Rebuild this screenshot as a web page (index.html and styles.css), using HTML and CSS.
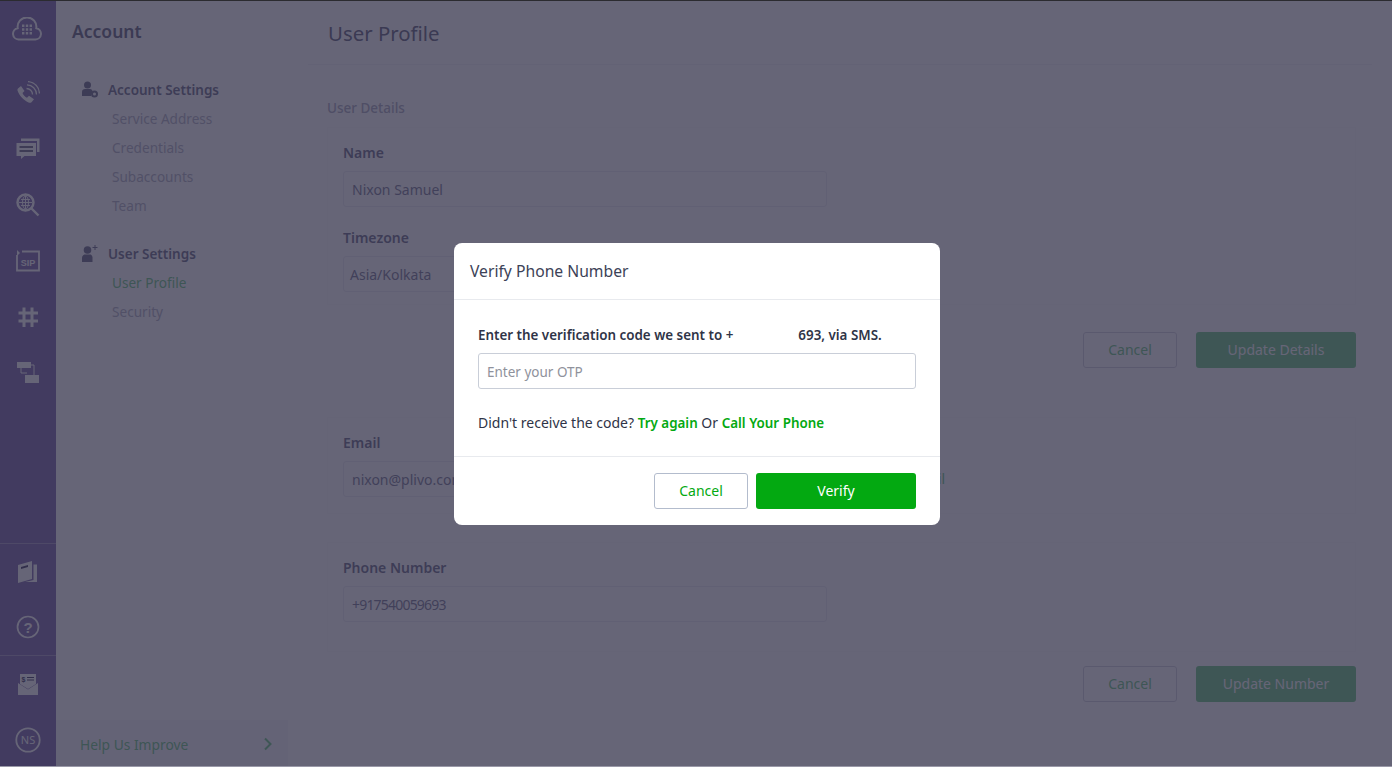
FILE: index.html
```html
<!DOCTYPE html>
<html lang="en">
<head>
  <meta charset="UTF-8">
  <title>User Profile</title>
  <link rel="stylesheet" href="styles.css">
</head>
<body>
  <div class="page">
    <nav class="rail">
      <div class="rail-logo">
        <svg width="32" height="24" viewBox="0 0 32 24"><path d="M7.500 22.500a5.700 5.700 0 0 1-.8-11.300A9.400 9.400 0 1 1 25.300 11.200a5.700 5.700 0 0 1-.8 11.300z" fill="none" stroke="#fff" stroke-width="2"/><path d="M11 7.500h2.400v2.400H11zM14.800 7.500h2.400v2.400h-2.400zM18.600 7.500H21v2.400h-2.400zM11 11.300h2.400v2.400H11zM14.800 11.300h2.400v2.400h-2.400zM18.600 11.300H21v2.400h-2.400zM11 15.100h2.400v2.400H11zM14.800 15.100h2.400v2.400h-2.400zM18.600 15.100H21v2.400h-2.400z" fill="#fff"/></svg>
      </div>
      <div class="rail-item">
        <svg width="24" height="24" viewBox="0 0 24 24"><path d="M2 7.500l3-2.500 3.500 5-2 2c.8 2 2.500 3.800 4.500 4.800l2-2 5 3.500-2.500 3c-.8.700-1.800.700-3 .2C7.500 19.200 3.200 14.500 1.600 9.800c-.3-.9-.2-1.700.4-2.300z" fill="#fff"/><path d="M10.500 7.500a6 6 0 0 1 6 6M11 3.800a9.700 9.700 0 0 1 9.500 9.700M12 .6a12 12 0 0 1 11.400 12" fill="none" stroke="#fff" stroke-width="1.300"/></svg>
      </div>
      <div class="rail-item">
        <svg width="24" height="22" viewBox="0 0 24 22"><path d="M5 3V.5h18.500V14H21V3z" fill="#fff"/><path d="M.5 5h19.500v13H8.500L5 21v-3H.5z" fill="#fff"/><path d="M3.500 9h13.500M3.500 13h13.500" stroke="#423c60" stroke-width="1.500"/></svg>
      </div>
      <div class="rail-item">
        <svg width="24" height="24" viewBox="0 0 24 24"><circle cx="9.500" cy="9.500" r="8" fill="none" stroke="#fff" stroke-width="2.400"/><path d="M9.500 3v13M3 9.500h13M5 6.500h9M5 12.500h9" stroke="#fff" stroke-width="1"/><ellipse cx="9.500" cy="9.500" rx="3" ry="6.500" fill="none" stroke="#fff"/><path d="M15 15l7.500 7.500" stroke="#fff" stroke-width="2.400"/></svg>
      </div>
      <div class="rail-item">
        <svg width="24" height="22" viewBox="0 0 24 22"><path d="M1 5v15.500h22V1.500H6" fill="none" stroke="#fff" stroke-width="1.800"/><path d="M1 0L4 3 1 6z" fill="#fff"/><text x="12" y="15.500" class="sip-text">SIP</text></svg>
      </div>
      <div class="rail-item">
        <svg width="20" height="20" viewBox="0 0 20 20"><path d="M6 .500V20M14 .500V20M.5 6H20M.5 14H20" stroke="#fff" stroke-width="3" fill="none"/></svg>
      </div>
      <div class="rail-item">
        <svg width="24" height="22" viewBox="0 0 24 22"><path d="M1 0h14v6H1zM9 13h14v8H9z" fill="#fff"/><path d="M15 3h3v10M5 6v5h6" stroke="#fff" stroke-width="1" fill="none"/></svg>
      </div>
      <div class="rail-bottom">
        <div class="rail-group">
          <div class="rail-item">
            <svg width="20" height="24" viewBox="0 0 20 24"><path d="M0 5L14 1v18L0 23z" fill="#fff"/><path d="M3 7l7-2v2l-7 2z" fill="#423c60"/><path d="M15.500 4.500H19V22H7l8.500-2z" fill="#fff"/></svg>
          </div>
          <div class="rail-item">
            <svg width="24" height="24" viewBox="0 0 24 24"><circle cx="12" cy="12" r="10.500" fill="none" stroke="#fff" stroke-width="1.700"/><text x="12" y="17.500" class="help-text">?</text></svg>
          </div>
        </div>
        <div class="rail-group">
          <div class="rail-item">
            <svg width="20" height="21" viewBox="0 0 20 21"><path d="M2 0h16v10l-8 5-8-5z" fill="#fff"/><path d="M0 9l10 6.500L20 9v12H0z" fill="#fff"/><text x="5.500" y="7.500" class="bill-text">$</text><path d="M9 3.500h7M9 6h7" stroke="#423c60" stroke-width="1"/></svg>
          </div>
          <div class="rail-item">
            <svg width="26" height="26" viewBox="0 0 26 26"><circle cx="13" cy="13" r="11.700" fill="none" stroke="#fff" stroke-width="1.800"/><text x="13" y="17" class="ns-text">NS</text></svg>
          </div>
        </div>
      </div>
    </nav>

    <aside class="subnav">
      <div class="subnav-body">
        <h2 class="subnav-title">Account</h2>
        <div class="subnav-group">
          <div class="subnav-head">
            <svg width="16" height="17" viewBox="0 0 16 17"><circle cx="5.500" cy="4" r="3.500" fill="#6e6e88"/><path d="M0 15V10.500C0 9 1.500 8 3 8h5c1.500 0 2.500 1 2.500 2.500L9 15z" fill="#6e6e88"/><circle cx="12.500" cy="13" r="2.500" fill="none" stroke="#6e6e88" stroke-width="2"/></svg>
            <span>Account Settings</span>
          </div>
          <a class="subnav-link">Service Address</a>
          <a class="subnav-link">Credentials</a>
          <a class="subnav-link">Subaccounts</a>
          <a class="subnav-link">Team</a>
        </div>
        <div class="subnav-group">
          <div class="subnav-head">
            <svg width="16" height="17" viewBox="0 0 16 17"><circle cx="5.500" cy="5" r="3.800" fill="#6e6e88"/><path d="M0 17v-4.500C0 11 1.500 9.500 3 9.500h5c1.500 0 2.500 1.500 2.500 3V17z" fill="#6e6e88"/><path d="M13 0v5M10.500 2.500h5" stroke="#6e6e88"/></svg>
            <span>User Settings</span>
          </div>
          <a class="subnav-link active">User Profile</a>
          <a class="subnav-link">Security</a>
        </div>
      </div>
      <div class="help-bar">
        <span>Help Us Improve</span>
        <svg width="10" height="14" viewBox="0 0 10 14"><path d="M2 1.500L7.500 7 2 12.500" fill="none" stroke="#70c884" stroke-width="2"/></svg>
      </div>
    </aside>

    <main class="content">
      <header class="content-head"><h1>User Profile</h1></header>
      <div class="content-body">
        <h3 class="section-title">User Details</h3>
        <section class="card card-details">
          <label class="field-label">Name</label>
          <div class="field">Nixon Samuel</div>
          <label class="field-label">Timezone</label>
          <div class="field field-select">Asia/Kolkata</div>
        </section>
        <div class="actions">
          <button class="btn btn-ghost">Cancel</button>
          <button class="btn btn-solid">Update Details</button>
        </div>
        <section class="card card-email">
          <label class="field-label">Email</label>
          <div class="field-row">
            <div class="field">nixon@plivo.com</div>
            <a class="verify-link">Verify Email</a>
          </div>
        </section>
        <section class="card card-phone">
          <label class="field-label">Phone Number</label>
          <div class="field field-number">+917540059693</div>
        </section>
        <div class="actions actions-last">
          <button class="btn btn-ghost">Cancel</button>
          <button class="btn btn-solid">Update Number</button>
        </div>
      </div>
    </main>

    <div class="overlay">
      <div class="modal">
        <div class="modal-head">Verify Phone Number</div>
        <div class="modal-body">
          <p class="otp-text">Enter the verification code we sent to +<span class="redacted"></span>693, via SMS.</p>
          <div class="otp-input">Enter your OTP</div>
          <p class="resend">Didn't receive the code? <a>Try again</a> Or <a>Call Your Phone</a></p>
        </div>
        <div class="modal-foot">
          <button class="btn btn-outline">Cancel</button>
          <button class="btn btn-verify">Verify</button>
        </div>
      </div>
    </div>
  </div>
</body>
</html>
```

FILE: styles.css
```css
* {
  box-sizing: border-box;
}
body {
  margin: 0;
  font-family: "Noto Sans", sans-serif;
  color: #3c4257;
  background: #fff;
}
.page {
  position: relative;
  display: flex;
  height: 767px;
  overflow: hidden;
  border-top: 1px solid #2b2b30;
  border-bottom: 1px solid #9a99a8;
}

/* icon rail */
.rail {
  width: 56px;
  flex: none;
  display: flex;
  flex-direction: column;
  background: #7d68ab;
}
.rail-logo {
  height: 64px;
  display: flex;
  align-items: center;
  justify-content: center;
  padding-bottom: 8px;
  padding-right: 2px;
}
.rail-item {
  height: 56px;
  display: flex;
  align-items: center;
  justify-content: center;
}
.rail-bottom {
  margin-top: auto;
}
.rail-group {
  border-top: 1px solid #a99bc6;
}
.rail-group .rail-item {
  height: 55.5px;
}
.rail-group:last-child .rail-item {
  height: 55px;
  padding-top: 2px;
}
.sip-text {
  font: 700 9px "Liberation Sans", sans-serif;
  fill: #fff;
  text-anchor: middle;
}
.help-text {
  font: 700 15px "Liberation Sans", sans-serif;
  fill: #fff;
  text-anchor: middle;
}
.bill-text {
  font: 700 7px "Liberation Sans", sans-serif;
  fill: #423c60;
  text-anchor: middle;
}
.ns-text {
  font: 400 11px "Noto Sans", sans-serif;
  fill: #fff;
  text-anchor: middle;
}

/* account menu */
.subnav {
  width: 232px;
  flex: none;
  display: flex;
  flex-direction: column;
}
.subnav-body {
  flex: 1;
  padding: 18px 0 0 16px;
}
.subnav-title {
  margin: 0 0 32px;
  height: 24px;
  line-height: 24px;
  font-size: 17.500px;
  font-weight: 600;
  color: #64647e;
}
.subnav-group {
  margin-bottom: 19px;
  padding-left: 10px;
}
.subnav-head {
  display: flex;
  align-items: center;
  gap: 10px;
  height: 29px;
  font-size: 13.500px;
  font-weight: 600;
  color: #6e6e88;
}
.subnav-link {
  display: block;
  height: 29px;
  line-height: 29px;
  padding-left: 30px;
  font-size: 13.600px;
  color: #b4b4c4;
}
.subnav-link.active {
  color: #70c884;
}
.help-bar {
  height: 46px;
  display: flex;
  align-items: center;
  justify-content: space-between;
  padding: 2px 15px 0 24px;
  font-size: 13.800px;
  color: #70c884;
  background: #f7f8fc;
}

/* profile form */
.content {
  flex: 1;
  padding: 0 20px;
}
.content-head {
  height: 64px;
  border-bottom: 1px solid #f4f4f7;
  padding: 18px 0 0 20px;
}
.content-head h1 {
  margin: 0;
  font-size: 20.400px;
  line-height: 28px;
  font-weight: 400;
  color: #64647e;
}
.content-body {
  padding: 0 16px 0 19px;
}
.section-title {
  margin: 33px 0 0;
  height: 20px;
  line-height: 20px;
  font-size: 13.500px;
  font-weight: 500;
  color: #acacbe;
}
.card {
  border: 1px solid #f9f9fb;
  padding: 15px 15px 0;
}
.card-details {
  margin-top: 9px;
  height: 178px;
}
.card-email {
  height: 97px;
}
.card-phone {
  margin-top: 28px;
  height: 110px;
}
.field-label {
  display: block;
  height: 20px;
  line-height: 20px;
  font-size: 14px;
  font-weight: 600;
  color: #6e6e88;
}
.field {
  width: 484px;
  height: 36px;
  line-height: 36px;
  margin: 8px 0 21px;
  padding-left: 8px;
  border: 1px solid #ececf2;
  border-radius: 3px;
  font-size: 14px;
  color: #7c7c96;
}
.field-select {
  padding-left: 6px;
}
.field-number {
  letter-spacing: -0.8px;
}
.field-row {
  display: flex;
  align-items: flex-start;
  justify-content: space-between;
  width: 602px;
}
.verify-link {
  margin-top: 16px;
  font-size: 14px;
  color: #70c884;
}
.actions {
  display: flex;
  justify-content: flex-end;
  gap: 19px;
  margin-top: 27px;
}
.actions-last {
  margin-top: 14px;
}
.btn {
  height: 36px;
  padding: 0;
  border-radius: 3px;
  font-family: inherit;
  font-size: 14px;
}
.btn-ghost {
  width: 94px;
  padding-bottom: 1px;
  background: transparent;
  border: 1px solid #d2d2de;
  color: #70c884;
}
.btn-solid {
  width: 160px;
  padding-bottom: 1px;
  background: #70c884;
  border: 0;
  color: #fff;
}
.actions + .card {
  margin-top: 49px;
}

/* verify dialog */
.overlay {
  position: absolute;
  inset: 0;
  display: flex;
  align-items: center;
  justify-content: center;
  padding-left: 2px;
  background: rgba(43, 42, 67, 0.72);
}
.modal {
  width: 486px;
  height: 282px;
  background: #fff;
  border-radius: 8px;
}
.modal-head {
  height: 57px;
  line-height: 56px;
  padding-left: 16px;
  border-bottom: 1px solid #e8eaee;
  font-size: 15.700px;
  color: #3c4257;
}
.modal-body {
  height: 157px;
  padding: 25px 24px 0;
  border-bottom: 1px solid #e8eaee;
}
.otp-text {
  margin: 0;
  height: 20px;
  line-height: 20px;
  font-size: 13.400px;
  font-weight: 600;
  color: #2f3447;
}
.redacted {
  display: inline-block;
  width: 65px;
}
.otp-input {
  height: 36px;
  line-height: 36px;
  margin-top: 8px;
  padding-left: 8px;
  border: 1px solid #c9ced8;
  border-radius: 3px;
  font-size: 13.500px;
  color: #8f929c;
}
.resend {
  margin: 24px 0 0;
  height: 20px;
  line-height: 20px;
  font-size: 14px;
  color: #2f3447;
}
.resend a {
  color: #03a911;
  font-size: 13.400px;
  font-weight: 600;
}
.modal-foot {
  display: flex;
  justify-content: flex-end;
  gap: 8px;
  padding: 16px 24px 0;
}
.btn-outline {
  width: 94px;
  background: #fff;
  border: 1px solid #b3bccd;
  color: #03a911;
}
.btn-verify {
  width: 160px;
  background: #03a911;
  border: 0;
  color: #fff;
}
```
